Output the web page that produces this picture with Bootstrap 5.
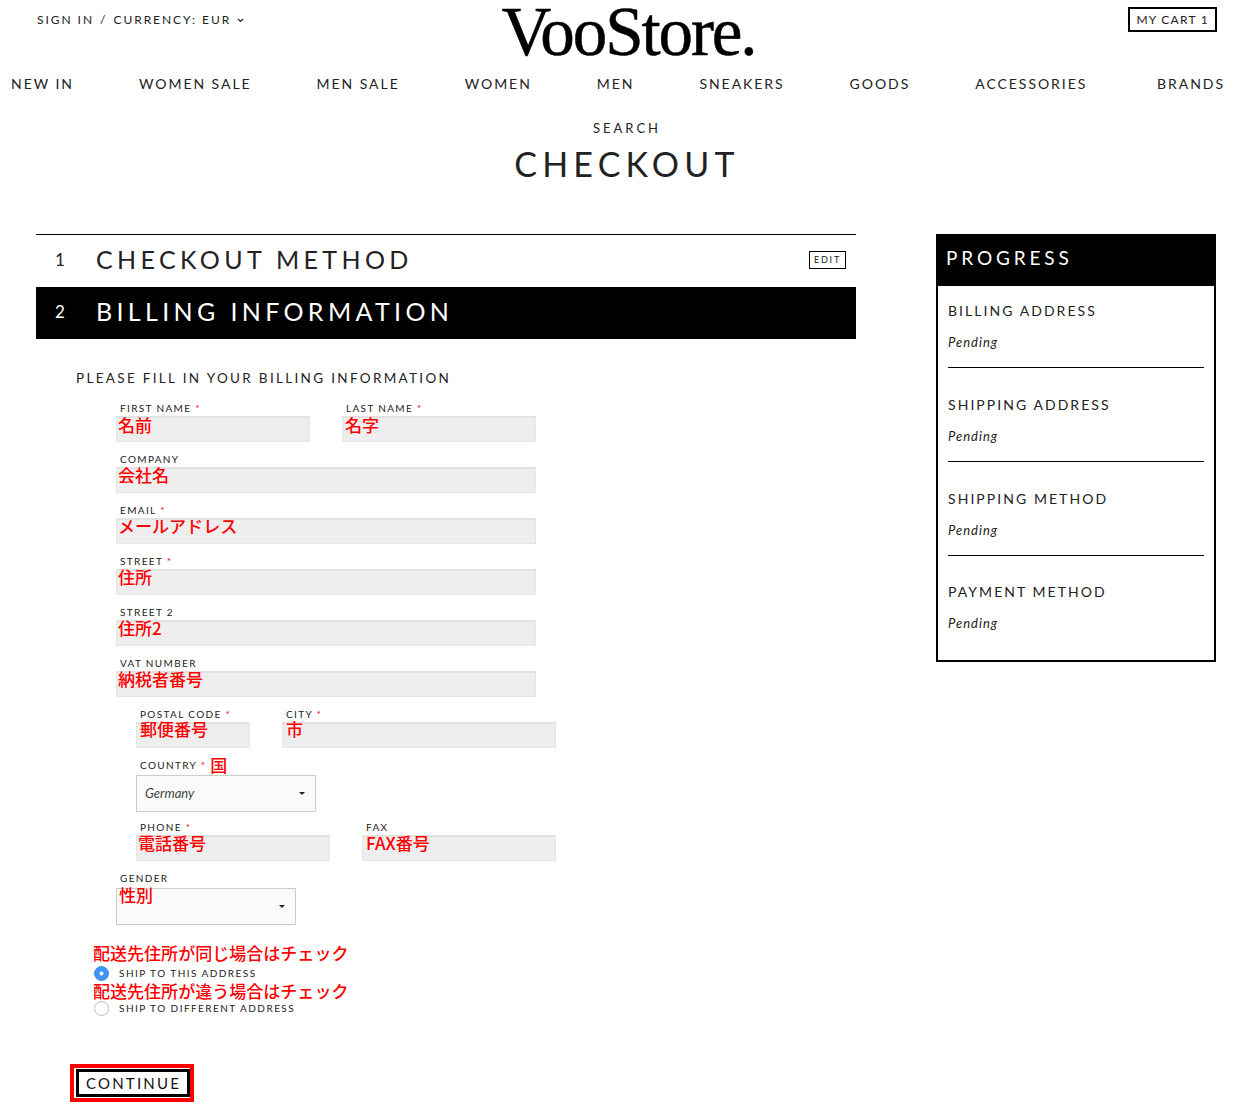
<!DOCTYPE html>
<html lang="en">
<head>
    <meta charset="UTF-8">
    <meta name="viewport" content="width=device-width, initial-scale=1.0">
    <title>VooStore Checkout</title>
    <link href="https://cdn.jsdelivr.net/npm/bootstrap@5.3.0/dist/css/bootstrap.min.css" rel="stylesheet">
    <style>
        body { font-family: "Lato", "Noto Sans CJK JP", sans-serif; color: #222; background: #fff; }
        a { color: inherit; text-decoration: none; }
        .top-bar { height: 65px; padding: 0 23px 0 37px; }
        .top-links { font-size: 12px; letter-spacing: 1.95px; line-height: 14px; padding-top: 13px; width: 300px; }
        .top-sep { margin: 0 6px; }
        .chev { margin-left: 1px; vertical-align: 1px; }
        .logo { font-family: "Liberation Serif", serif; font-size: 69px; letter-spacing: -2.1px; line-height: 65px; color: #000; -webkit-text-stroke: .5px #000; margin-left: 3px; }
        .cart-box { width: 300px; padding-top: 7px; }
        .cart-btn { border: 2px solid #000; font-size: 12px; letter-spacing: 1.25px; line-height: 21px; padding: 0 6px; }
        .main-nav { padding: 0 15px 0 11px; height: 38px; font-size: 14px; letter-spacing: 1.95px; line-height: 38px; gap: 65px; }
        .search-link { font-size: 13px; letter-spacing: 3px; line-height: 16px; margin-top: 17px; padding-left: 14px; }
        .page-title { font-size: 34px; font-weight: 400; letter-spacing: 5.2px; line-height: 40px; margin: 8px 0 0; color: #222; padding-left: 14px; }
        .page-body { padding: 0 24px 0 36px; margin-top: 50px; }
        .col-left { width: 820px; }
        .step { height: 52px; padding-left: 19px; }
        .step-first { border-top: 1px solid #000; height: 53px; }
        .step-num { width: 41px; font-size: 17px; margin-top: -2px; }
        .step-title { font-size: 25px; letter-spacing: 4.35px; line-height: 1; color: #222; margin-top: -4px; }
        .step-active { background: #000; }
        .step-active .step-num, .step-active .step-title { color: #fff; }
        .edit-tag { border: 1px solid #000; font-size: 9px; letter-spacing: 1.8px; line-height: 16px; padding: 0 4px; margin: -2px 10px 0 auto; }
        .fill-note { font-size: 13.5px; letter-spacing: 2.32px; line-height: 16px; padding-left: 40px; margin: 31px 0 0; }
        .billing-form { padding-left: 80px; margin-top: 16px; }
        .sub-fields { padding-left: 20px; }
        .form-row-line { gap: 32px; }
        .w-full { width: 420px; }
        .w-half { width: 194px; }
        .w-postal { width: 114px; }
        .w-city { width: 274px; }
        .field-cell { margin-bottom: 11px; }
        .field-label { display: block; font-size: 10px; letter-spacing: 1.35px; line-height: 12px; padding: 0 0 2px 4px; margin: 0; }
        .req { color: #e00; }
        .field-input.form-control { height: 26px; border-radius: 0; border: 1px solid #e6e6e6; border-top: 2px solid #e2e2e2; background: #eee; padding: 0; box-shadow: none; }
        .sel-box.form-select { height: 37px; width: 180px; border-radius: 0; border: 1px solid #ccc; background-color: #fafafa; font-style: italic; font-size: 13px; color: #444; padding: 0 0 0 8px; background-size: 6px 3px; background-position: right 10px center; background-image: url("data:image/svg+xml,%3csvg xmlns='http://www.w3.org/2000/svg' viewBox='0 0 8 4'%3e%3cpath fill='%23222' d='M0 0h8L4 4z'/%3e%3c/svg%3e"); }
        .anno { position: absolute; color: #f00; font-size: 17.05px; font-weight: 500; line-height: 20px; font-family: "Noto Sans CJK JP", sans-serif; white-space: nowrap; left: 2px; top: 12px; }
        .anno-shift { left: 4px; }
        .anno-first { top: 13px; }
        .anno-last { left: 3px; }
        .anno-high { top: 11px; }
        .anno-inline { color: #f00; font-size: 17px; font-weight: 500; line-height: 13px; font-family: "Noto Sans CJK JP", sans-serif; margin: -1px 0 0 4px; letter-spacing: 0; }
        .field-country { margin-bottom: 9px; }
        .country-label { height: 16px; padding-bottom: 0; line-height: 13px; }
        .gender-cell .field-label { height: 16px; padding-bottom: 0; line-height: 13px; }
        .gender-cell .anno { top: 13px; left: 3px; }
        .ship-wrap { margin: 18px 0 0 -23px; }
        .anno-line { color: #f00; font-size: 17.05px; font-weight: 500; line-height: 20px; font-family: "Noto Sans CJK JP", sans-serif; white-space: nowrap; }
        .ship-opt { height: 15px; font-size: 10px; letter-spacing: 1.45px; }
        .ship-first { margin-top: 3px; }
        .ship-radio.form-check-input { width: 15px; height: 15px; margin: 0 10px 0 1px; border: 1px solid #bbb; flex-shrink: 0; }
        .ship-radio.form-check-input:checked { background-color: #3d94f2; border-color: #3d94f2; background-image: url("data:image/svg+xml,%3csvg xmlns='http://www.w3.org/2000/svg' viewBox='-4 -4 8 8'%3e%3ccircle r='1.2' fill='%23fff'/%3e%3c/svg%3e"); }
        .cta-frame { display: inline-block; border: 4px solid #f00; padding: 1px 0 1px 2px; margin: 48px 0 0 34px; }
        .cta-btn.btn { border: 3px solid #000; border-radius: 0; background: #fff; color: #111; font-size: 15px; letter-spacing: 2.2px; line-height: 22px; padding: 0 6px 0 7px; display: block; }
        .progress-box { width: 280px; height: 428px; border: 2px solid #000; }
        .progress-head { background: #000; color: #fff; height: 50px; font-size: 19px; letter-spacing: 3.85px; line-height: 44px; padding-left: 8px; }
        .progress-list { padding: 16px 10px 0; }
        .progress-item { border-bottom: 1px solid #000; height: 66px; margin-bottom: 27.8px; }
        .progress-item:last-child { border-bottom: 0; }
        .progress-name { font-size: 14px; letter-spacing: 2.05px; line-height: 18px; }
        .progress-state { font-style: italic; font-size: 13px; letter-spacing: 1px; line-height: 16px; margin-top: 14px; }
    </style>
</head>
<body>
    <div class="top-bar d-flex justify-content-between align-items-start">
        <div class="top-links text-nowrap">
            <a href="#">SIGN IN</a><span class="top-sep">/</span><a href="#">CURRENCY: EUR</a>
            <svg class="chev" width="7" height="5" viewBox="0 0 7 5"><path d="M1 1l2.5 2.5L6 1" fill="none" stroke="#222" stroke-width="1.2"/></svg>
        </div>
        <a href="#" class="logo text-nowrap">VooStore.</a>
        <div class="cart-box d-flex justify-content-end"><a href="#" class="cart-btn">MY CART 1</a></div>
    </div>

    <nav class="main-nav d-flex text-nowrap">
        <a href="#">NEW IN</a>
        <a href="#">WOMEN SALE</a>
        <a href="#">MEN SALE</a>
        <a href="#">WOMEN</a>
        <a href="#">MEN</a>
        <a href="#">SNEAKERS</a>
        <a href="#">GOODS</a>
        <a href="#">ACCESSORIES</a>
        <a href="#" class="ms-auto">BRANDS</a>
    </nav>

    <div class="text-center search-link"><a href="#">SEARCH</a></div>
    <h1 class="page-title text-center">CHECKOUT</h1>

    <div class="page-body d-flex justify-content-between align-items-start">
        <div class="col-left">
            <div class="step step-first d-flex align-items-center">
                <span class="step-num">1</span>
                <span class="step-title">CHECKOUT METHOD</span>
                <a href="#" class="edit-tag">EDIT</a>
            </div>
            <div class="step step-active d-flex align-items-center">
                <span class="step-num">2</span>
                <span class="step-title">BILLING INFORMATION</span>
            </div>

            <p class="fill-note">PLEASE FILL IN YOUR BILLING INFORMATION</p>

            <form class="billing-form">
                <div class="d-flex form-row-line">
                    <div class="field-cell w-half position-relative">
                        <label class="field-label">FIRST NAME <span class="req">*</span></label>
                        <input class="form-control field-input">
                        <span class="anno anno-first">名前</span>
                    </div>
                    <div class="field-cell w-half position-relative">
                        <label class="field-label">LAST NAME <span class="req">*</span></label>
                        <input class="form-control field-input">
                        <span class="anno anno-first anno-last">名字</span>
                    </div>
                </div>
                <div class="field-cell w-full position-relative">
                    <label class="field-label">COMPANY</label>
                    <input class="form-control field-input">
                    <span class="anno">会社名</span>
                </div>
                <div class="field-cell w-full position-relative">
                    <label class="field-label">EMAIL <span class="req">*</span></label>
                    <input class="form-control field-input">
                    <span class="anno">メールアドレス</span>
                </div>
                <div class="field-cell w-full position-relative">
                    <label class="field-label">STREET <span class="req">*</span></label>
                    <input class="form-control field-input">
                    <span class="anno">住所</span>
                </div>
                <div class="field-cell w-full position-relative">
                    <label class="field-label">STREET 2</label>
                    <input class="form-control field-input">
                    <span class="anno">住所2</span>
                </div>
                <div class="field-cell w-full position-relative">
                    <label class="field-label">VAT NUMBER</label>
                    <input class="form-control field-input">
                    <span class="anno">納税者番号</span>
                </div>

                <div class="sub-fields">
                    <div class="d-flex form-row-line">
                        <div class="field-cell w-postal position-relative">
                            <label class="field-label">POSTAL CODE <span class="req">*</span></label>
                            <input class="form-control field-input">
                            <span class="anno anno-shift anno-high">郵便番号</span>
                        </div>
                        <div class="field-cell w-city position-relative">
                            <label class="field-label">CITY <span class="req">*</span></label>
                            <input class="form-control field-input">
                            <span class="anno anno-shift anno-high">市</span>
                        </div>
                    </div>
                    <div class="field-country">
                        <label class="field-label country-label d-flex align-items-start"><span>COUNTRY <span class="req">*</span></span><span class="anno-inline">国</span></label>
                        <select class="form-select sel-box"><option>Germany</option></select>
                    </div>
                    <div class="d-flex form-row-line phone-row">
                        <div class="field-cell w-half position-relative">
                            <label class="field-label">PHONE <span class="req">*</span></label>
                            <input class="form-control field-input">
                            <span class="anno">電話番号</span>
                        </div>
                        <div class="field-cell w-half position-relative">
                            <label class="field-label">FAX</label>
                            <input class="form-control field-input">
                            <span class="anno anno-shift">FAX番号</span>
                        </div>
                    </div>
                </div>

                <div class="position-relative gender-cell">
                    <label class="field-label">GENDER</label>
                    <select class="form-select sel-box"><option></option></select>
                    <span class="anno">性別</span>
                </div>

                <div class="ship-wrap">
                    <div class="anno-line">配送先住所が同じ場合はチェック</div>
                    <label class="ship-opt ship-first d-flex align-items-center"><input class="form-check-input ship-radio" type="radio" name="ship" checked>SHIP TO THIS ADDRESS</label>
                    <div class="anno-line">配送先住所が違う場合はチェック</div>
                    <label class="ship-opt d-flex align-items-center"><input class="form-check-input ship-radio" type="radio" name="ship">SHIP TO DIFFERENT ADDRESS</label>
                </div>
            </form>

            <div class="cta-frame"><button type="button" class="btn cta-btn">CONTINUE</button></div>
        </div>

        <aside class="progress-box">
            <div class="progress-head">PROGRESS</div>
            <div class="progress-list">
                <div class="progress-item">
                    <div class="progress-name">BILLING ADDRESS</div>
                    <div class="progress-state">Pending</div>
                </div>
                <div class="progress-item">
                    <div class="progress-name">SHIPPING ADDRESS</div>
                    <div class="progress-state">Pending</div>
                </div>
                <div class="progress-item">
                    <div class="progress-name">SHIPPING METHOD</div>
                    <div class="progress-state">Pending</div>
                </div>
                <div class="progress-item">
                    <div class="progress-name">PAYMENT METHOD</div>
                    <div class="progress-state">Pending</div>
                </div>
            </div>
        </aside>
    </div>
</body>
</html>
